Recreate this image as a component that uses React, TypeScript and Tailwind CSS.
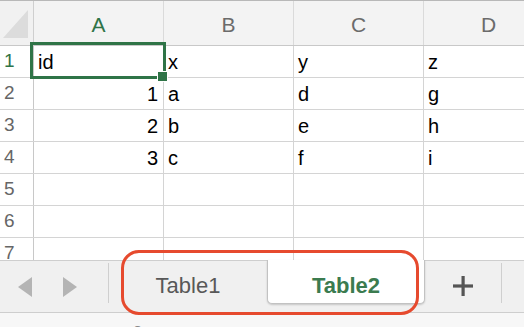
import type { ReactNode } from "react";

const rows: string[][] = [
  ["id", "x", "y", "z"],
  ["1", "a", "d", "g"],
  ["2", "b", "e", "h"],
  ["3", "c", "f", "i"],
  ["", "", "", ""],
  ["", "", "", ""],
  ["", "", "", ""],
];

const cols = ["A", "B", "C", "D"];

function Cell({ value }: { value: string }) {
  const isNum = value !== "" && !isNaN(Number(value));
  return (
    <div
      className={
        "flex h-full w-[130px] shrink-0 items-center border-r border-[#d4d4d4] " +
        (isNum ? "justify-end pr-[5px]" : "pl-[4px]")
      }
    >
      {value}
    </div>
  );
}

function Tab({ children, active }: { children: ReactNode; active?: boolean }) {
  if (active) {
    return (
      <div className="-mt-px flex h-[44px] w-[158px] shrink-0 justify-center rounded-b-[5px] border-x border-b border-[#c2c2c2] bg-white pt-[15px] text-[22px] leading-none font-bold text-[#3b7b4f] shadow-[0_1px_2px_rgba(0,0,0,0.18)]">
        {children}
      </div>
    );
  }
  return (
    <div className="flex w-[158px] shrink-0 justify-center pt-[14px] text-[22px] leading-none text-[#585858]">
      {children}
    </div>
  );
}

export default function App() {
  return (
    <div
      className="relative h-[327px] w-[524px] overflow-hidden bg-white"
      style={{ fontFamily: '"Liberation Sans", Arial, sans-serif' }}
    >
      {/* sheet */}
      <div className="relative h-[260px] overflow-hidden">
        <div className="flex h-[46px] border-t border-b border-t-[#b8b8b8] border-b-[#c8c8c8] bg-[#f3f3f3]">
          <div className="relative w-[34px] shrink-0 border-r border-[#cfcfcf] bg-[#f1f1f1]">
            <svg className="absolute left-[3px] top-[9px]" width="25" height="28" viewBox="0 0 25 28">
              <polygon points="0,28 25,28 25,0" fill="#dcdcdc" />
            </svg>
          </div>
          {cols.map((c, i) => (
            <div
              key={c}
              className={
                "flex w-[130px] shrink-0 justify-center border-r border-[#dadada] pt-[8px] text-[21px] " +
                (i === 0 ? "text-[#2f7447]" : "text-[#6b6b6b]")
              }
            >
              {c}
            </div>
          ))}
        </div>

        {rows.map((r, i) => (
          <div key={i} className="flex h-[32px] border-b border-[#d4d4d4] text-[20px] text-black">
            <div
              className={
                "flex w-[34px] shrink-0 items-center border-r border-[#c8c8c8] pl-[4px] text-[19px] " +
                (i === 0 ? "text-[#2f7447]" : "text-[#666]")
              }
            >
              {i + 1}
            </div>
            {r.map((v, j) => (
              <Cell key={j} value={v} />
            ))}
          </div>
        ))}

        {/* selection */}
        <div className="absolute left-[30px] top-[42px] h-[37px] w-[136px] border-[3px] border-[#2f7447]" />
        <div className="absolute left-[157px] top-[71px] h-[11px] w-[11px] border border-white bg-[#2f7447]" />
      </div>

      {/* tab bar */}
      <div className="flex h-[53px] border-t border-b border-[#cecece] bg-[#f0f0f0]">
        <div className="flex w-[108px] shrink-0 items-center">
          <svg className="ml-[18px]" width="14" height="20" viewBox="0 0 14 20">
            <polygon points="14,0 14,20 0,10" fill="#b4b4b4" />
          </svg>
          <svg className="ml-[31px]" width="14" height="20" viewBox="0 0 14 20">
            <polygon points="0,0 0,20 14,10" fill="#b4b4b4" />
          </svg>
        </div>
        <div className="mt-[2px] h-[40px] w-px shrink-0 bg-[#cfcfcf]" />
        <Tab>Table1</Tab>
        <Tab active>Table2</Tab>
        <div className="flex w-[76px] shrink-0 items-center justify-center pb-[2px]">
          <svg width="20" height="20" viewBox="0 0 20 20">
            <rect x="8.5" y="0" width="3.2" height="20" fill="#555" />
            <rect x="0" y="8.4" width="20" height="3.2" fill="#555" />
          </svg>
        </div>
        <div className="mt-[2px] h-[40px] w-px shrink-0 bg-[#cfcfcf]" />
      </div>

      {/* status strip */}
      <div className="h-[14px] bg-[#f7f7f7] pl-[133px] pt-[9px] text-[16px] leading-none text-[#8a8a8a]">
        o
      </div>

      {/* annotation */}
      <div className="pointer-events-none absolute left-[121px] top-[250px] h-[65px] w-[298px] rounded-[18px] border-[3px] border-[#e64a2e]" />
    </div>
  );
}
